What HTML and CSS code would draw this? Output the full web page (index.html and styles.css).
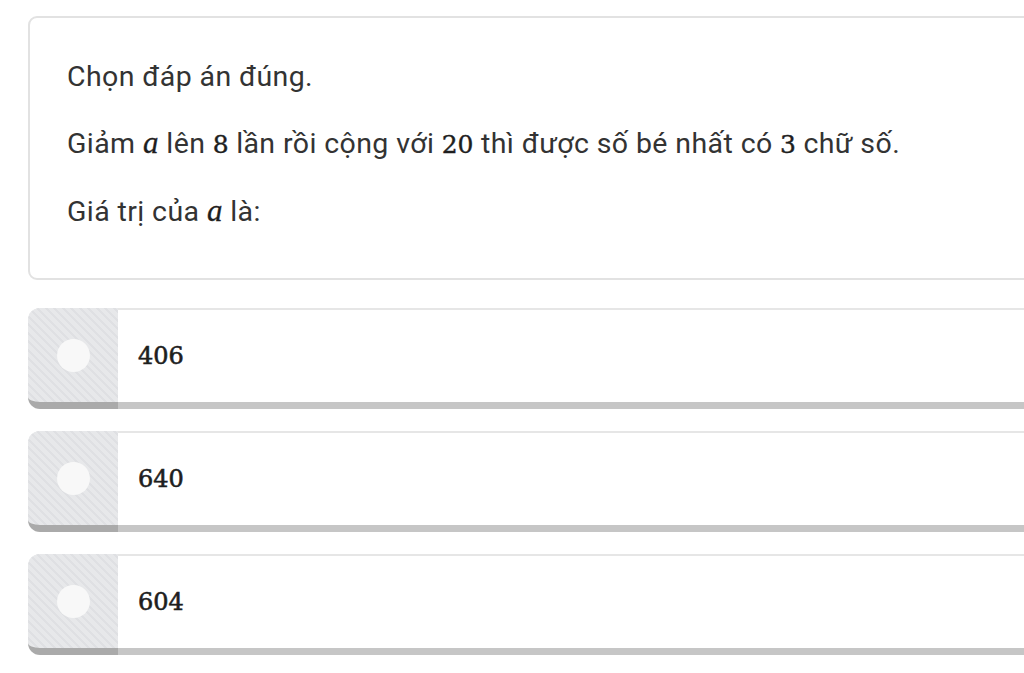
FILE: index.html
```html
<!DOCTYPE html>
<html lang="vi">
<head>
    <meta charset="UTF-8" />
    <meta name="viewport" content="width=device-width, initial-scale=1" />
    <title>Chọn đáp án đúng</title>
    <link rel="stylesheet" href="styles.css">
</head>
<body>
    <main class="quiz">
        <section class="question">
            <p>Chọn đáp án đúng.</p>
            <p>Giảm <span class="math-var">a</span> lên <span class="math-num">8</span> lần rồi cộng với <span class="math-num">20</span> thì được số bé nhất có <span class="math-num">3</span> chữ số.</p>
            <p>Giá trị của <span class="math-var">a</span> là:</p>
        </section>

        <div class="options">
            <label class="option">
                <span class="option-mark"><span class="dot"></span></span>
                <span class="option-text">406</span>
            </label>
            <label class="option">
                <span class="option-mark"><span class="dot"></span></span>
                <span class="option-text">640</span>
            </label>
            <label class="option">
                <span class="option-mark"><span class="dot"></span></span>
                <span class="option-text">604</span>
            </label>
        </div>
    </main>
</body>
</html>
```

FILE: styles.css
```css
body {
    margin: 0;
    background-color: #ffffff;
    font-family: Roboto, "Liberation Sans", Arial, sans-serif;
    color: #333;
    overflow: hidden;
}
.quiz {
    padding: 16px 0 0 28px;
    width: 1030px;
}
.question {
    border: 2px solid #e2e2e2;
    border-radius: 9px;
    padding: 41px 30px 48px 37px;
}
.question p {
    margin: 0 0 30px;
    font-size: 28.5px;
    letter-spacing: 0.4px;
    line-height: 36px;
    white-space: nowrap;
}
.question p:last-child {
    margin-bottom: 0;
}
.math-var {
    font-family: "Liberation Serif", "DejaVu Serif", serif;
    font-style: italic;
    font-size: 31px;
    color: #1e1e1e;
    -webkit-text-stroke: 0.3px #1e1e1e;
}
.math-num {
    font-family: "DejaVu Serif", "Liberation Serif", serif;
    font-size: 25px;
    letter-spacing: 0;
    color: #1e1e1e;
    -webkit-text-stroke: 0.4px #1e1e1e;
}
.options {
    margin-top: 28px;
    display: flex;
    flex-direction: column;
    gap: 22px;
}
.option {
    display: flex;
    height: 101px;
    cursor: pointer;
}
.option-mark {
    width: 90px;
    display: flex;
    align-items: center;
    justify-content: center;
    border-radius: 12px 0 0 12px;
    border-bottom: 7px solid #aaaaaa;
    background-color: #e2e3e5;
    background-image: repeating-linear-gradient(45deg, #dfe0e3 0 2px, #e7e8ea 2px 6px);
}
.dot {
    width: 33px;
    height: 33px;
    border-radius: 50%;
    background-color: #f8f8f8;
}
.option-text {
    flex: 1;
    display: flex;
    align-items: center;
    padding-left: 20px;
    border-top: 2px solid #e6e6e6;
    border-bottom: 7px solid #c6c6c6;
    font-family: "DejaVu Serif", "Liberation Serif", serif;
    font-size: 24px;
    color: #1e1e1e;
    -webkit-text-stroke: 0.6px #1e1e1e;
}
```
